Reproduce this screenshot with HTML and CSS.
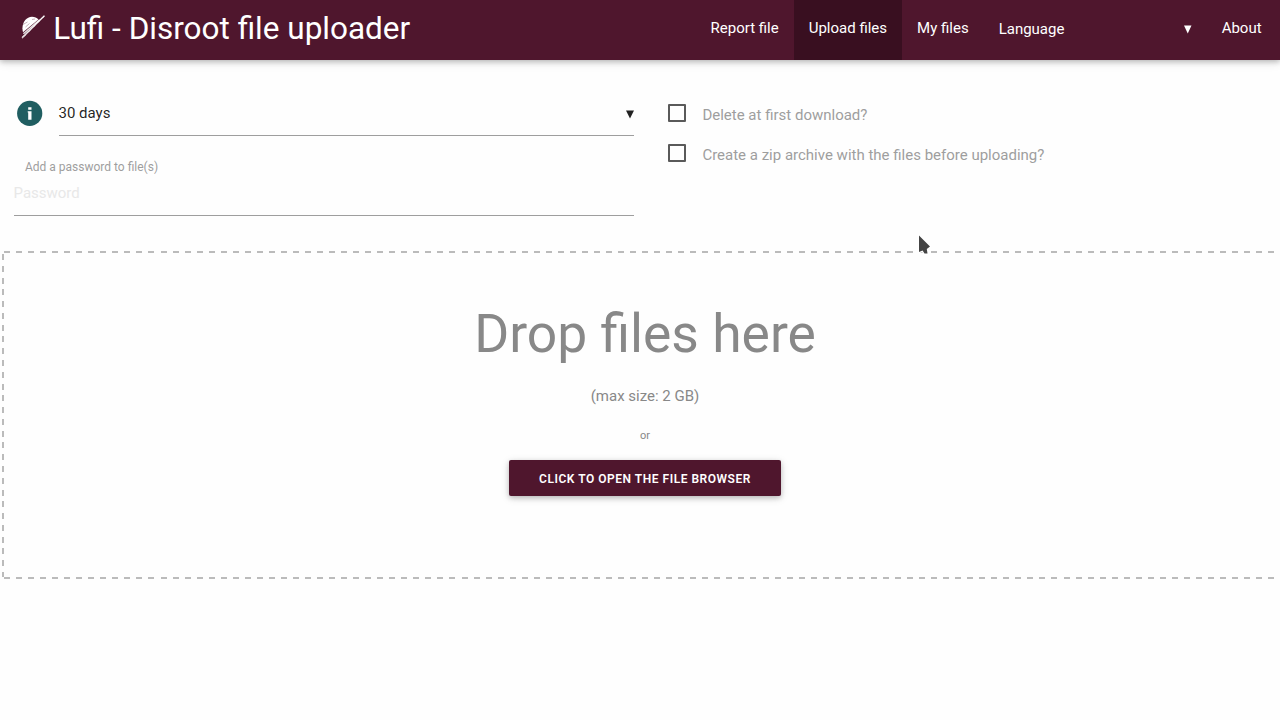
FILE: index.html
```html
<!DOCTYPE html>
<html lang="en">
<head>
<meta charset="utf-8">
<title>Lufi - Disroot file uploader</title>
<link rel="stylesheet" href="styles.css">
</head>
<body>
<nav class="navbar">
  <a class="brand">
    <svg class="logo" viewBox="0 0 24 24" width="24" height="24">
      <path d="M2 17.200C-.2 9 4.600 1.800 11 1.700c2.800 0 4.800 1 6.400 2.700z" fill="#fff"/>
      <path d="M2 9.500l4.500-2.500M4.500 12l4-3.500M11 4.500l3-.5" stroke="#4f162d" stroke-width=".8" opacity=".4"/>
      <path d="M2.400 18.800L18.600 4.800" stroke="#fff" stroke-width="1.300" opacity=".9"/>
      <path d="M1 22.600L23.400 .6" fill="none" stroke="#fff" stroke-width="1.300"/>
      <path d="M1.600 23.400L23.800 1.200" fill="none" stroke="#fff" stroke-width=".7" stroke-dasharray="1.200 .6"/>
    </svg>
    <span>Lufi - Disroot file uploader</span>
  </a>
  <div class="menu">
    <a class="item">Report file</a>
    <a class="item active">Upload files</a>
    <a class="item">My files</a>
    <div class="language"><span>Language</span><svg class="caret" viewBox="0 0 8 8" width="8" height="8"><path d="M0 .5h7.500L3.750 8.500z" fill="currentColor"/></svg></div>
    <a class="item">About</a>
  </div>
</nav>
<main>
  <form class="options">
    <div class="column">
      <div class="delay">
        <svg class="info" viewBox="0 0 26 26" width="26" height="26"><circle cx="12.700" cy="13.400" r="12.600" fill="#205e61"/><path d="M11.200 7.200h3.300v2.600h-3.300zM10.700 11.200h3.800v8.500h-3.300v-7.200h-.5z" fill="#fff"/></svg>
        <div class="select"><span>30 days</span><svg class="caret" viewBox="0 0 8 8" width="8" height="8"><path d="M0 .5h8L4 8.500z" fill="currentColor"/></svg></div>
      </div>
      <label class="password-label">Add a password to file(s)</label>
      <div class="password">Password</div>
    </div>
    <div class="checks">
      <label class="check"><span class="box"></span><span class="check-text">Delete at first download?</span></label>
      <label class="check"><span class="box"></span><span class="check-text">Create a zip archive with the files before uploading?</span></label>
    </div>
  </form>
  <section class="dropzone">
    <h2>Drop files here</h2>
    <p class="size">(max size: 2 GB)</p>
    <p class="or">or</p>
    <button class="browse">Click to open the file browser</button>
  </section>
</main>
<svg class="pointer" viewBox="0 0 16 22" width="16" height="22"><path d="M2 1.500V18l3.600-1.600 1.900 3h3l-.7-4.500L13 12.500z" fill="#444" stroke="#fff" stroke-width="2.600" stroke-linejoin="round" paint-order="stroke"/></svg>
</body>
</html>
```
FILE: styles.css
```css
* { box-sizing: border-box; }
body {
  margin: 0;
  height: 720px;
  overflow: hidden;
  background: #fefefe;
  color: rgba(0, 0, 0, .87);
  font: 15px/1.5 Roboto, sans-serif;
}
.navbar {
  display: flex;
  justify-content: space-between;
  height: 60px;
  background: #4f162d;
  color: #fff;
  box-shadow: 0 2px 5px 0 rgba(0, 0, 0, .2), 0 2px 10px 0 rgba(0, 0, 0, .12);
}
.brand {
  display: flex;
  padding-left: 21px;
  font-size: 31.5px;
  line-height: 58px;
  white-space: nowrap;
}
.logo { margin: 15px 8.2px 0 0; }
.menu { display: flex; padding-right: 3.4px; line-height: 56px; }
.item { padding: 0 15px; white-space: nowrap; }
.active { background: #390f20; }
.language {
  display: flex;
  justify-content: space-between;
  align-items: center;
  width: 223px;
  height: 58px;
  padding: 0 15px;
}
.caret { flex: none; overflow: visible; }
.options { display: flex; height: 191px; }
.column { width: 634px; padding: 30px 0 0 14px; }
.delay { display: flex; gap: 16px; padding-left: 2.500px; }
.info { flex: none; margin-top: 10px; }
.select {
  display: flex;
  flex: 1;
  justify-content: space-between;
  align-items: center;
  height: 46px;
  padding-top: 2px;
  border-bottom: 1px solid #9e9e9e;
}
.password-label {
  display: block;
  height: 18px;
  margin: 22px 0 0 11px;
  color: #9e9e9e;
  font-size: 12px;
  line-height: 18px;
}
.password {
  height: 40px;
  border-bottom: 1px solid #9e9e9e;
  color: #e8e8e8;
  line-height: 34px;
  text-indent: -.5px;
}
.checks { padding: 44px 0 0 34px; }
.check { display: flex; height: 40px; gap: 16.400px; }
.box { width: 18px; height: 18px; border: 2px solid #5a5a5a; border-radius: 1px; }
.check-text { color: #9e9e9e; line-height: 22px; }
/* Dashed frame with a 12px rhythm, drawn as three gradient strips */
.dropzone {
  --row: repeating-linear-gradient(90deg, #bbb 0 6px, transparent 6px 12.040px);
  display: flex;
  flex-direction: column;
  align-items: center;
  width: 1286px;
  height: 328px;
  margin-left: 2px;
  padding-top: 49px;
  background:
    var(--row) 2px 0 / 1271px 2px no-repeat,
    var(--row) 2px 100% / 1271px 2px no-repeat,
    repeating-linear-gradient(180deg, #bbb 0 6px, transparent 6px 11.780px) 0 2.500px / 2px 323px no-repeat;
  color: #888;
}
.dropzone h2 { margin: 0; font-size: 53.4px; font-weight: 400; line-height: 68px; }
.dropzone p { margin: 0; }
.size { padding-top: 17px; }
.or { padding-top: 20px; font-size: 11px; line-height: 16px; }
.browse {
  width: 272px;
  height: 36px;
  margin-top: 16.500px;
  padding: 1px 0 0;
  border: 0;
  border-radius: 2px;
  background: #4f162d;
  color: #fff;
  font: 600 12px/36px Roboto, sans-serif;
  letter-spacing: .53px;
  text-transform: uppercase;
  box-shadow: 0 2px 5px 0 rgba(0, 0, 0, .2), 0 2px 10px 0 rgba(0, 0, 0, .12);
}
.pointer { position: absolute; left: 917px; top: 234px; }
```
